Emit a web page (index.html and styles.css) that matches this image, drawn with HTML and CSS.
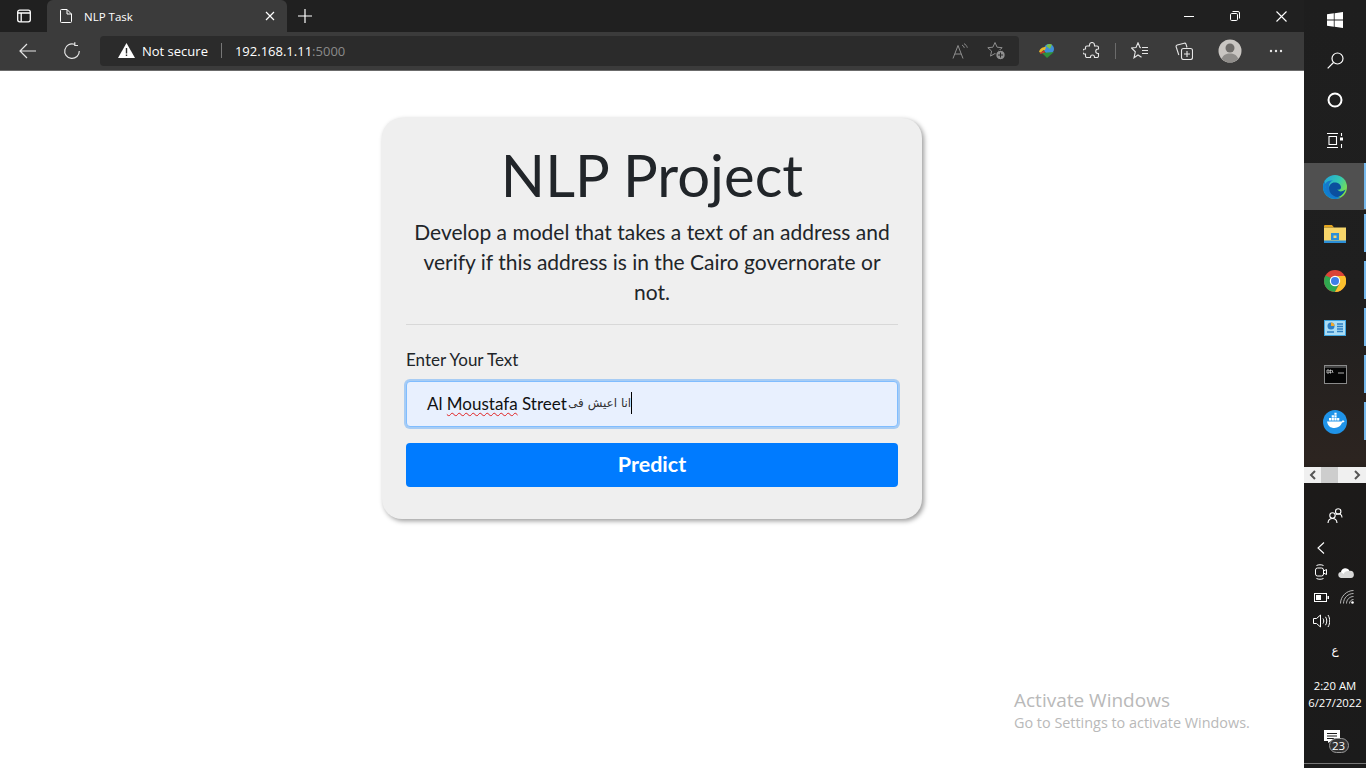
FILE: index.html
```html
<!DOCTYPE html>
<html lang="en">
<head>
    <meta charset="UTF-8">
    <meta name="viewport" content="width=device-width, initial-scale=1.0">
    <title>NLP Task</title>
    <link rel="stylesheet" href="styles.css">
</head>
<body>
    <div class="desktop">
        <div class="browser">
            <!-- tab strip -->
            <div class="tabstrip">
                <div class="tab-actions">
                    <svg width="16" height="16" viewBox="0 0 16 16" fill="none" stroke="#fff" stroke-width="1.3"><rect x="1.7" y="2.2" width="12.6" height="11.6" rx="2"/><path d="M1.7 5h12.6M5.2 5v8.8"/></svg>
                </div>
                <div class="tab">
                    <svg width="14" height="16" viewBox="0 0 14 16" fill="none" stroke="#fff" stroke-width="1"><path d="M1.5 2.5a1 1 0 0 1 1-1h5.5l4.500 4.500v7.500a1 1 0 0 1-1 1h-9a1 1 0 0 1-1-1zM8 1.500v4.500h4.500"/></svg>
                    <span class="tab-title">NLP Task</span>
                    <svg class="tab-close" width="10" height="10" viewBox="0 0 10 10" stroke="#fff" stroke-width="1.2"><path d="M1 1l8 8M9 1l-8 8"/></svg>
                </div>
                <div class="new-tab">
                    <svg width="14" height="14" viewBox="0 0 14 14" stroke="#fff" stroke-width="1.2"><path d="M7 0v14M0 7h14"/></svg>
                </div>
                <div class="window-controls">
                    <div class="win-btn"><svg width="10" height="10" viewBox="0 0 10 10" stroke="#fff"><path d="M0 5.500h10"/></svg></div>
                    <div class="win-btn"><svg width="10" height="10" viewBox="0 0 10 10" fill="none" stroke="#fff"><rect x=".5" y="2.500" width="7" height="7" rx="1.200"/><path d="M2.500 .5h5.500a1.500 1.500 0 0 1 1.500 1.500v5.500"/></svg></div>
                    <div class="win-btn"><svg width="11" height="11" viewBox="0 0 11 11" stroke="#fff" stroke-width="1.100"><path d="M.5 .5l10 10M10.500 .5l-10 10"/></svg></div>
                </div>
            </div>

            <!-- toolbar -->
            <div class="toolbar">
                <div class="nav-btn nav-back">
                    <svg width="18" height="16" viewBox="0 0 18 16" fill="none" stroke="#e6e6e6" stroke-width="1.200"><path d="M17 8H1M8 1L1 8l7 7"/></svg>
                </div>
                <div class="nav-btn nav-reload">
                    <svg width="18" height="18" viewBox="0 0 18 18" fill="none" stroke="#e6e6e6" stroke-width="1.200"><path d="M11.500 2.300A7.300 7.300 0 1 0 16.300 9M11.800 .3v3.200h3.200" /></svg>
                </div>
                <div class="address-bar">
                    <svg class="warn-icon" width="17" height="15" viewBox="0 0 17 15"><path fill="#fff" d="M8.500 0L17 15H0z"/><path fill="#2b2b2b" d="M7.800 5h1.400v5.500H7.800zM7.800 11.500h1.400v1.400H7.800z"/></svg>
                    <span class="not-secure">Not secure</span>
                    <span class="addr-sep"></span>
                    <span class="url">192.168.1.11<span class="url-port">:5000</span></span>
                    <div class="addr-icons">
                        <svg width="17" height="16" viewBox="0 0 17 16" fill="none" stroke="#8f8f8f" stroke-width="1"><path d="M1 15.500L6 2.500l5 13M2.800 11h6.400M10 2c1.200.5 2 1.500 2.300 2.800M12 .7c1.700.8 2.800 2.200 3.300 4"/></svg>
                        <svg width="19" height="19" viewBox="0 0 19 19"><path fill="none" stroke="#8f8f8f" d="M8 1.500l2.100 4.700 5.100.5-3.800 3.400 1.100 5-4.500-2.600-4.500 2.600 1.100-5L.8 6.700l5.100-.5z"/><circle cx="13.500" cy="14" r="4.700" fill="#8f8f8f" stroke="#2b2b2b"/><path stroke="#2b2b2b" d="M13.500 11.500v5M11 14h5"/></svg>
                    </div>
                </div>
                <div class="tool-icons">
                    <svg class="tool-idm" width="18" height="16" viewBox="0 0 18 16"><circle cx="11" cy="6" r="5" fill="#3f8fd8"/><path d="M8 3a5 5 0 0 1 6-1.500L12 6z" fill="#79c24a"/><path d="M1 9c1-4 4-5 7-5l-1 3c-2 0-3 1-3.500 3z" fill="#e8b92a"/><path d="M2 11c0-2 2-3 5-3l-.5 2z" fill="#d3382c"/><path d="M4 10l12-1-7 6z" fill="#2f8f3a"/></svg>
                    <svg class="tool-ext" width="18" height="18" viewBox="0 0 18 18" fill="none" stroke="#e6e6e6" stroke-width="1.100"><path d="M6.500 3a2.500 2.500 0 0 1 5 0v1h2.500a1.500 1.500 0 0 1 1.500 1.500V7h-.5a2 2 0 0 0 0 4.500h.5v2.500a1.500 1.500 0 0 1-1.500 1.500h-2.500v-.5a2 2 0 0 0-4 0v.5H4a1.500 1.500 0 0 1-1.500-1.500V12h-.5a2.500 2.500 0 0 1 0-5h.5V5.500A1.500 1.500 0 0 1 4 4h2.500z"/></svg>
                    <span class="tool-sep"></span>
                    <svg class="tool-fav" width="18" height="17" viewBox="0 0 18 17" fill="none" stroke="#e6e6e6" stroke-width="1.100"><path d="M10 5.800L9 5.500 7 .8 5 5.500l-4.500.5 3.800 3.800L3 15.800 7 13l3.500 2.300M11 5.500h6M11 8.500h6M11 11.500h6"/></svg>
                    <svg class="tool-coll" width="18" height="18" viewBox="0 0 18 18" fill="none" stroke="#e6e6e6" stroke-width="1.100"><rect x="6.500" y="6.500" width="11" height="11" rx="2"/><path d="M12 9v6M9 12h6M3.800 13L1.200 5a1.500 1.500 0 0 1 1-2l7-1.800a1.500 1.500 0 0 1 1.800 1l1 3.300"/></svg>
                    <svg class="tool-profile" width="24" height="24" viewBox="0 0 24 24"><circle cx="12" cy="12" r="11.500" fill="#c9c6c2"/><circle cx="12" cy="9" r="4.500" fill="#6e6c69"/><path d="M3.800 20c1-4 4.500-5.500 8.200-5.500s7.200 1.500 8.200 5.500a11.500 11.500 0 0 1-16.400 0z" fill="#8f8d8a"/></svg>
                    <svg class="tool-more" width="14" height="4" viewBox="0 0 14 4" fill="#e6e6e6"><circle cx="2" cy="2" r="1.200"/><circle cx="7" cy="2" r="1.200"/><circle cx="12" cy="2" r="1.200"/></svg>
                </div>
            </div>

            <!-- page -->
            <div class="page">
                <div class="card">
                    <h1 class="card-title">NLP Project</h1>
                    <p class="card-lead">Develop a model that takes a text of an address and verify if this address is in the Cairo governorate or not.</p>
                    <hr class="card-rule">
                    <div class="field-label">Enter Your Text</div>
                    <div class="text-input">Al <span class="misspelled">Moustafa</span> Street <span class="arabic" dir="rtl">انا اعيش فى</span><span class="caret"></span></div>
                    <button class="predict-btn">Predict</button>
                </div>
                <div class="activate">
                    <div class="activate-title">Activate Windows</div>
                    <div class="activate-sub">Go to Settings to activate Windows.</div>
                </div>
            </div>
        </div>

        <!-- vertical taskbar -->
        <div class="taskbar">
            <div class="task-top">
                <div class="task-cell"><svg width="16" height="16" viewBox="0 0 16 16" fill="#fff"><path d="M0 2.300l6.800-1v6.300H0zM7.600 1.200L16 0v7.600H7.600zM0 8.400h6.800v6.300l-6.800-1zM7.600 8.400H16V16l-8.400-1.200z"/></svg></div>
                <div class="task-cell"><svg width="17" height="17" viewBox="0 0 17 17" fill="none" stroke="#fff" stroke-width="1.200"><circle cx="10.500" cy="6.500" r="5.500"/><path d="M6.500 10.500L.7 16.300"/></svg></div>
                <div class="task-cell"><svg width="16" height="16" viewBox="0 0 16 16" fill="none" stroke="#fff" stroke-width="2"><circle cx="8" cy="8" r="6.500"/></svg></div>
                <div class="task-cell"><svg width="16" height="15" viewBox="0 0 16 15" fill="none" stroke="#fff" stroke-width="1.100"><path d="M0 .5h11M0 14.500h11M2 3.500h7.500v8H2zM14.500 0v3M14.500 11v4"/><rect x="13" y="4.500" width="3" height="3" fill="#fff" stroke="none"/></svg></div>
            </div>
            <div class="task-apps">
                <div class="app-cell app-active">
                    <svg width="24" height="24" viewBox="0 0 24 24"><defs><linearGradient id="edgeA" x1="0" y1="0" x2="1" y2=".6"><stop offset="0" stop-color="#1f9fe0"/><stop offset=".6" stop-color="#35c8b0"/><stop offset="1" stop-color="#7ee04a"/></linearGradient></defs><circle cx="12" cy="12" r="12" fill="url(#edgeA)"/><path d="M2 6C1 14 6 22 17 23c-2 .8-3.500 1-5 1C5 24 0 18 0 12c0-2 .8-4.500 2-6z" fill="#0f7fd0"/><path d="M2 9c2-3 5-4 8-3.500-3 1-4.500 4-4 7.500.8 5 5.500 8.500 12 9.300-1.500.5-2.500.7-4 .7-7-.5-12-6-12-14z" fill="#1578cc"/><path d="M6 13c0-3 2.500-5.500 5.500-5.500 4 0 6 2 6.500 4.500.3 2-1.500 3-3.500 2.500 1 2 4 3 8 0-1.500 4-4.500 7-8 7.500-5-.5-8.500-4.500-8.500-9z" fill="#0b4f9e"/></svg>
                    <span class="app-bar"></span>
                </div>
                <div class="app-cell">
                    <svg width="22" height="18" viewBox="0 0 22 18"><path d="M0 1a1 1 0 0 1 1-1h7l2 2.500H0z" fill="#e3a51f"/><rect y="2.500" width="22" height="15.500" fill="#f6d56a"/><rect x="7" y="8" width="8" height="7" fill="#2b8fd8"/><rect x="9.500" y="10.500" width="3" height="2.500" fill="#f6d56a"/><rect y="15.500" width="22" height="2.500" fill="#2b8fd8"/></svg>
                    <span class="app-bar"></span>
                </div>
                <div class="app-cell">
                    <svg width="22" height="22" viewBox="0 0 22 22"><circle cx="11" cy="11" r="11" fill="#db4437"/><path d="M1.500 5.500A11 11 0 0 0 11 22l5-10z" fill="#2fa84f"/><path d="M11 6h10a11 11 0 0 1-10 16l5-9z" fill="#fbc02d"/><circle cx="11" cy="11" r="5.200" fill="#fff"/><circle cx="11" cy="11" r="4" fill="#3f7ee8"/></svg>
                    <span class="app-bar"></span>
                </div>
                <div class="app-cell">
                    <svg width="22" height="16" viewBox="0 0 22 16"><rect width="22" height="16" fill="#3fa5e0"/><rect x="1" y="1" width="20" height="14" fill="#a9dcf5"/><circle cx="7" cy="6" r="3.500" fill="#2d7fc4"/><path d="M7 6V2.500A3.500 3.500 0 0 1 10.500 6z" fill="#f0a82c"/><path d="M13 4h6M13 6.500h6M13 9h6M13 11.500h6M3 12h7" stroke="#2d7fc4" stroke-width="1.300"/></svg>
                    <span class="app-bar"></span>
                </div>
                <div class="app-cell">
                    <svg width="23" height="19" viewBox="0 0 23 19"><rect width="23" height="19" fill="#8a8a8a"/><rect x="1" y="3" width="21" height="15" fill="#050505"/><rect x="1" y="1" width="21" height="2" fill="#444"/><path d="M3 5h2v3H3zM6 5h1v1H6zM6 7h1v1H6zM8 5l1 3M14 8h6" stroke="#d8d8d8" stroke-width=".8" fill="none"/></svg>
                    <span class="app-bar"></span>
                </div>
                <div class="app-cell">
                    <svg width="24" height="24" viewBox="0 0 24 24"><circle cx="12" cy="12" r="12" fill="#1f93e8"/><path d="M4 11.500h14c1 0 1.500-.7 1.500-1.300.8.100 1.700.500 2 1-.5 1-1.500 1.400-2.500 1.400-1 3.400-4 5.400-7.500 5.400-4 0-6.700-2-7.500-6.500z" fill="#fff"/><path d="M6 8h2.200v2.500H6zM8.700 8h2.200v2.500H8.700zM11.400 8h2.200v2.500h-2.200zM8.700 5.300h2.200v2.200H8.700zM11.400 5.300h2.200v2.200h-2.200zM11.400 2.800h2.200v2H11.400zM14.100 8h2.200v2.500h-2.200z" fill="#fff"/></svg>
                    <span class="app-bar"></span>
                </div>
            </div>
            <div class="task-scroll">
                <svg width="7" height="10" viewBox="0 0 7 10" fill="none" stroke="#555" stroke-width="2"><path d="M6 1L2 5l4 4"/></svg>
                <span class="scroll-thumb"></span>
                <svg width="7" height="10" viewBox="0 0 7 10" fill="none" stroke="#555" stroke-width="2"><path d="M1 1l4 4-4 4"/></svg>
            </div>
            <div class="tray">
                <svg class="tray-people" width="16" height="16" viewBox="0 0 16 16" fill="none" stroke="#fff" stroke-width="1.100"><circle cx="11.200" cy="3.500" r="2.700"/><circle cx="5.500" cy="7.500" r="2.700"/><path d="M1 15c.2-3 2-4.500 4.500-4.500S9.800 12 10 15M9 6.500c.7-.500 1.400-.700 2.200-.700 2 0 3.600 1.200 3.800 3.700"/></svg>
                <svg class="tray-chevron" width="8" height="12" viewBox="0 0 8 12" fill="none" stroke="#fff" stroke-width="1.100"><path d="M7 .5L1 6l6 5.500"/></svg>
                <div class="tray-row">
                    <svg width="14" height="16" viewBox="0 0 14 16" fill="none" stroke="#fff"><rect x="1.500" y="4" width="8" height="8" rx="2"/><path d="M9.500 7l3-1.500v5l-3-1.500M2.500 1.500c2-1 5-1 7 0M2.500 14.500c2 1 5 1 7 0"/></svg>
                    <svg width="16" height="11" viewBox="0 0 16 11"><path fill="#d8d8d8" d="M3.500 11a3 3 0 0 1-.4-6A4.500 4.500 0 0 1 11.500 4a3.500 3.500 0 0 1 1.500 7z"/><path fill="#fff" d="M3.100 5A4.500 4.500 0 0 1 11.500 4c-3-.5-5 .5-6 3-1-.8-1.500-1.500-2.400-2z"/></svg>
                </div>
                <div class="tray-row">
                    <svg width="15" height="9" viewBox="0 0 15 9"><rect x=".5" y=".5" width="12" height="8" fill="none" stroke="#fff"/><rect x="2" y="2" width="5" height="5" fill="#fff"/><rect x="13.500" y="3" width="1.500" height="3" fill="#fff"/></svg>
                    <svg width="14" height="14" viewBox="0 0 14 14" fill="none" stroke="#c8c8c8" stroke-width=".9"><path d="M.5 13.500C.5 6.500 6.500 .5 13.500 .5M3.500 13.500c0-5.500 4.500-10 10-10M6.500 13.500c0-3.800 3.200-7 7-7M9.500 13.500c0-2.200 1.800-4 4-4"/><circle cx="12.500" cy="12.500" r="1.300" fill="#fff" stroke="none"/></svg>
                </div>
                <svg class="tray-volume" width="17" height="14" viewBox="0 0 17 14" fill="none" stroke="#fff" stroke-width="1"><path d="M.5 4.500h3l4-3.500v12l-4-3.500h-3zM10 4.500c1 1.500 1 3.500 0 5M12.500 2.800c1.700 2.600 1.700 5.800 0 8.400M15 1c2.300 3.700 2.300 8.300 0 12"/></svg>
                <div class="tray-lang">ع</div>
                <div class="tray-clock">
                    <div>2:20 AM</div>
                    <div>6/27/2022</div>
                </div>
                <div class="tray-notify">
                    <svg width="16" height="13" viewBox="0 0 16 13"><path fill="#fff" d="M0 0h16v11H7l-3 2v-2H0z"/><path stroke="#1c1c1c" d="M3 3.500h10M3 6h10M3 8.500h7"/></svg>
                    <span class="notify-badge">23</span>
                </div>
            </div>
        </div>
    </div>
</body>
</html>
```

FILE: styles.css
```css
* {
    box-sizing: border-box;
}
body {
    margin: 0;
    font-family: "Open Sans", Arial, sans-serif;
    background-color: #fff;
    overflow: hidden;
}
.desktop {
    display: flex;
    width: 1366px;
    height: 768px;
}
.browser {
    width: 1304px;
    display: flex;
    flex-direction: column;
}

/* tab strip */
.tabstrip {
    height: 32px;
    background-color: #202020;
    display: flex;
    align-items: flex-end;
}
.tab-actions {
    width: 47px;
    height: 32px;
    display: flex;
    align-items: center;
    justify-content: center;
}
.tab {
    width: 240px;
    height: 32px;
    background-color: #3b3b3b;
    border-radius: 6px 6px 0 0;
    display: flex;
    align-items: center;
    padding: 0 12px;
    color: #fff;
    font-family: "Open Sans", sans-serif;
    font-size: 11.500px;
}
.tab-title {
    margin-left: 11px;
    flex: 1;
}
.new-tab {
    width: 36px;
    height: 32px;
    display: flex;
    align-items: center;
    justify-content: center;
}
.window-controls {
    margin-left: auto;
    display: flex;
    height: 32px;
}
.win-btn {
    width: 46px;
    display: flex;
    align-items: center;
    justify-content: center;
}

/* toolbar */
.toolbar {
    height: 39px;
    background-color: #3b3b3b;
    border-bottom: 1px solid #6b6b6b;
    display: flex;
    align-items: center;
    padding-bottom: 1px;
}
.nav-btn {
    width: 44px;
    display: flex;
    justify-content: center;
}
.nav-back {
    margin-left: 6px;
}
.nav-reload {
    margin-right: 6px;
}
.address-bar {
    width: 919px;
    height: 30px;
    background-color: #2b2b2b;
    border-radius: 4px;
    display: flex;
    align-items: center;
    padding-left: 18px;
    font-size: 13px;
    color: #fff;
}
.not-secure {
    margin-left: 7px;
}
.addr-sep {
    width: 1px;
    height: 15px;
    background-color: #777;
    margin: 0 13px 0 13px;
}
.url-port {
    color: #8a8a8a;
}
.addr-icons {
    margin-left: auto;
    display: flex;
    align-items: center;
    gap: 18px;
    padding-right: 13px;
}
.tool-icons {
    flex: 1;
    display: flex;
    align-items: center;
    padding-left: 19px;
}
.tool-ext {
    margin-left: 27px;
}
.tool-sep {
    width: 1px;
    height: 16px;
    background-color: #6b6b6b;
    margin: 0 15px 0 14px;
}
.tool-coll {
    margin-left: 26px;
}
.tool-profile {
    margin-left: 25px;
}
.tool-more {
    margin-left: 27px;
}

/* page */
.page {
    flex: 1;
    background-color: #fff;
    position: relative;
    padding-top: 47px;
}
.card {
    width: 540px;
    height: 401px;
    margin: 0 auto;
    background-color: #efefef;
    border-radius: 20px;
    box-shadow: 2px 2px 5px rgba(0, 0, 0, 0.4);
    padding: 24px 24px 32px;
    color: #212529;
    font-family: "Lato", sans-serif;
}
.card-title {
    margin: 0 0 9px;
    font-size: 58px;
    font-weight: 400;
    line-height: 66px;
    text-align: center;
}
.card-lead {
    margin: 0;
    font-size: 21px;
    line-height: 30px;
    text-align: center;
}
.card-rule {
    margin: 17px 0 23px;
    border: 0;
    border-top: 1px solid #d8d8d8;
}
.field-label {
    font-size: 17px;
    line-height: 24px;
    margin-bottom: 9px;
}
.text-input {
    height: 46px;
    background-color: #e8f0fe;
    border: 1px solid #80bdff;
    border-radius: 4px;
    box-shadow: 0 0 0 2px rgba(0, 123, 255, 0.3);
    padding: 0 20px 2px;
    display: flex;
    align-items: center;
    font-size: 17px;
    color: #111;
    white-space: pre;
}
.misspelled {
    text-decoration: underline wavy #e02020 1px;
    text-underline-offset: 2px;
}
.arabic {
    margin-left: -3px;
    font-family: "DejaVu Sans", sans-serif;
    font-size: 12px;
    color: #333;
}
.caret {
    width: 1px;
    height: 22px;
    background-color: #000;
}
.predict-btn {
    display: block;
    width: 100%;
    height: 44px;
    margin-top: 16px;
    padding-bottom: 4px;
    background-color: #007bff;
    color: #fff;
    border: none;
    border-radius: 4px;
    font-family: "Lato", sans-serif;
    font-size: 21.500px;
    font-weight: 700;
}

/* watermark */
.activate {
    position: absolute;
    left: 1014px;
    top: 617px;
    color: #b9b9b9;
    font-family: "Open Sans", sans-serif;
    white-space: nowrap;
}
.activate-title {
    font-size: 19px;
    line-height: 24px;
}
.activate-sub {
    font-size: 14.400px;
    line-height: 22px;
}

/* taskbar */
.taskbar {
    width: 62px;
    height: 768px;
    background: linear-gradient(#1e1e1e 0, #1f1f1f 300px, #2c2420 460px, #1c1a19 484px, #1b1b1b 100%);
    display: flex;
    flex-direction: column;
}
.task-top {
    height: 163px;
}
.task-cell {
    height: 40px;
    display: flex;
    align-items: center;
    justify-content: center;
}
.app-cell {
    height: 47px;
    display: flex;
    align-items: center;
    justify-content: center;
    position: relative;
}
.app-active {
    background-color: #505050;
}
.app-bar {
    position: absolute;
    right: 0;
    top: 4px;
    bottom: 5px;
    width: 2px;
    background-color: #76b9ed;
}
.app-active .app-bar {
    top: 0;
    bottom: 1px;
}
.task-scroll {
    margin-top: 22px;
    height: 16px;
    background-color: #f0f0f0;
    display: flex;
    align-items: center;
    padding: 0 5px;
}
.scroll-thumb {
    width: 17px;
    height: 16px;
    margin: 0 auto 0 5px;
    background-color: #cdcdcd;
}
.tray {
    flex: 1;
    display: flex;
    flex-direction: column;
    align-items: center;
    color: #fff;
    font-family: "Open Sans", sans-serif;
    font-size: 12px;
    border-bottom: 1px solid #777;
    margin-bottom: 4px;
}
.tray-people {
    margin-top: 25px;
}
.tray-chevron {
    margin: 18px 0 0 13px;
    align-self: flex-start;
}
.tray-row {
    width: 100%;
    height: 24px;
    margin-top: 6px;
    margin-bottom: -5px;
    padding: 0 12px 0 10px;
    display: flex;
    align-items: center;
    justify-content: space-between;
}
.tray-volume {
    margin-top: 10px;
    align-self: flex-start;
    margin-left: 9px;
}
.tray-lang {
    margin-top: 14px;
    font-family: "DejaVu Sans", sans-serif;
    font-size: 12px;
    line-height: 16px;
}
.tray-clock {
    margin-top: 19px;
    text-align: center;
    line-height: 17px;
    font-size: 11.300px;
    white-space: nowrap;
}
.tray-notify {
    margin-top: 19px;
    position: relative;
    width: 16px;
    height: 13px;
    margin-left: -7px;
}
.tray-notify svg {
    display: block;
}
.notify-badge {
    position: absolute;
    left: 5px;
    top: 8px;
    width: 20px;
    height: 15px;
    border-radius: 8px;
    background-color: #333;
    border: 1px solid #999;
    font-size: 11.500px;
    line-height: 13px;
    text-align: center;
}
```
